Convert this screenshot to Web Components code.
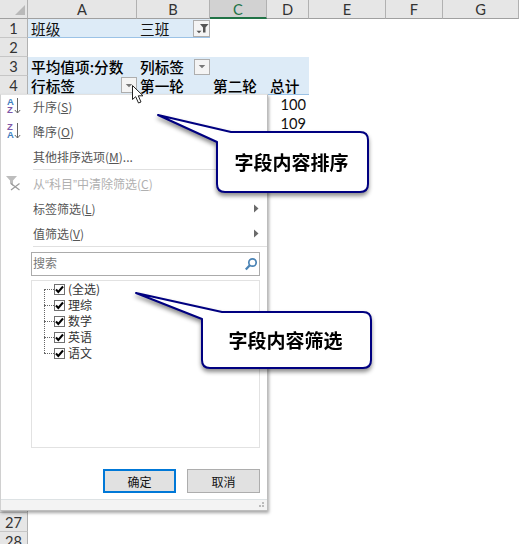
<!DOCTYPE html>
<html lang="zh">
<head>
<meta charset="utf-8">
<title>数据透视表筛选</title>
<style>
  html, body { margin: 0; padding: 0; background: #fff; }
  body { width: 519px; height: 544px; overflow: hidden; position: relative; }
</style>
</head>
<body>
<xl-sheet></xl-sheet>
<xl-filter-menu></xl-filter-menu>
<xl-cursor></xl-cursor>
<xl-callout left="158" top="115" width="212" height="79" body-x="60" body-y="18" attach-top="74" attach-left="28">字段内容排序</xl-callout>
<xl-callout left="136" top="293" width="237" height="77" body-x="67" body-y="20" attach-top="87" attach-left="27">字段内容筛选</xl-callout>

<script>
const CJK = '"Noto Sans CJK SC", "Noto Sans", sans-serif';
const LATIN = 'Lato, "Noto Sans CJK SC", sans-serif';

const COLS = [
  ['A', 109], ['B', 73], ['C', 57], ['D', 42],
  ['E', 77], ['F', 57], ['G', 76],
];
const ROW_COUNT = 28;

const FILTER_BTN = (funnel) => `
  <span class="drop ${funnel ? 'wide' : ''}">
    <svg width="15" height="15" viewBox="0 0 15 15">
      ${funnel
        ? '<path d="M6 3h8.500L11.500 6.500V11.500H9V6.500Z" fill="#555"/><path d="M2.500 9.800h5L5 12.300Z" fill="#555"/>'
        : '<path d="M4 6h7L7.500 9.500Z" fill="#777"/>'}
    </svg>
  </span>`;

// the worksheet behind the popup, no gridlines
class XlSheet extends HTMLElement {
  constructor() {
    super();
    this.attachShadow({ mode: 'open' });
  }

  connectedCallback() {
    const head = COLS.map(([name]) =>
      `<div class="ch ${name === 'C' ? 'sel' : ''}">${name}</div>`).join('');
    const cells = {
      1: { A: ['pv end', '班级'], B: ['pv end btn', '三班', true] },
      3: { A: ['pv bold', '平均值项:分数'], B: ['pv bold btn', '列标签', false], C: ['pv'], D: ['pv'] },
      4: { A: ['pv bold btn end', '行标签', false], B: ['pv bold end', '第一轮'], C: ['pv bold end', '第二轮'], D: ['pv bold end', '总计'] },
      5: { D: ['num', '100'] },
      6: { D: ['num', '109'] },
    };
    let rows = '';
    for (let r = 1; r <= ROW_COUNT; r++) {
      // rows 5-26 are under the popup
      rows += `<div class="rh">${r <= 4 || r >= 27 ? r : ''}</div>`;
      COLS.forEach(([name]) => {
        const c = (cells[r] || {})[name];
        if (!c) { rows += '<div class="c"></div>'; return; }
        const [cls, text, funnel] = c;
        rows += `<div class="c ${cls}"><span class="t">${text || ''}</span>${cls.includes('btn') ? FILTER_BTN(funnel) : ''}</div>`;
      });
    }
    this.shadowRoot.innerHTML = `
      <style>
        :host { display: block; width: 519px; height: 544px; overflow: hidden; }
        .grid {
          display: grid;
          grid-template-columns: 28px ${COLS.map(c => c[1] + 'px').join(' ')};
          grid-template-rows: 19px repeat(${ROW_COUNT}, 19px);
          font: 14.670px ${CJK};
          color: #111;
        }
        .corner {
          background: #e6e6e6;
          border-right: 1px solid #b1b1b1;
          border-bottom: 1px solid #a0a0a0;
          box-sizing: border-box;
          display: flex; align-items: flex-end; justify-content: flex-end;
          padding: 0 2px 3px 0;
        }
        .ch, .rh {
          background: #e6e6e6;
          box-sizing: border-box;
          font: 14.670px ${LATIN};
          color: #333;
          display: flex; align-items: center; justify-content: center;
        }
        .ch { border-right: 1px solid #b1b1b1; border-bottom: 1px solid #a0a0a0; padding-top: 1px; }
        .ch.sel { background: #d2d2d2; border-bottom: 2px solid #217346; color: #217346; }
        .rh { border-right: 1px solid #b1b1b1; border-bottom: 1px solid #c6c6c6; }
        .c {
          display: flex; align-items: center; justify-content: space-between;
          box-sizing: border-box; padding: 0 0 0 3px; min-width: 0;
          white-space: nowrap; line-height: 19px;
        }
        .pv { background: #ddebf7; }
        .end { border-bottom: 1px solid #9bc2e6; }
        .bold .t { font-weight: 500; color: #000; }
        .num { justify-content: flex-end; padding: 0 3px 0 0; font: 14.670px ${LATIN}; }
        .drop {
          flex: none; box-sizing: border-box; width: 16px; height: 16px; display: flex;
          align-items: center; justify-content: center;
          background: #f4f4f4; border: 1px solid #aeaeae;
        }
        .drop.wide { width: 17px; height: 17px; }
      </style>
      <div class="grid">
        <div class="corner"><svg width="10" height="10" style="display:block"><path d="M10 0v10H0Z" fill="#b9b9b9"/></svg></div>
        ${head}
        ${rows}
      </div>`;
  }
}

class XlMenuItem extends HTMLElement {
  constructor() {
    super();
    this.attachShadow({ mode: 'open' }).innerHTML = `
      <style>
        :host {
          display: flex; align-items: center; height: 25px;
          font: 12px ${CJK}; color: #555; position: relative;
        }
        :host([disabled]) { color: #b0b0b0; }
        .icon { flex: none; width: 32px; height: 25px; }
        .label { flex: 1; }
        .sub { flex: none; width: 13px; display: none; }
        :host([submenu]) .sub { display: block; }
        ::slotted(svg) { display: block; }
      </style>
      <div class="icon"><slot name="icon"></slot></div>
      <div class="label"><slot></slot></div>
      <svg class="sub" width="13" height="9" viewBox="0 0 13 9"><path d="M0 0.500l4.500 4-4.500 4Z" fill="#6a6a6a"/></svg>`;
  }
}

class XlCheckRow extends HTMLElement {
  constructor() {
    super();
    this.attachShadow({ mode: 'open' }).innerHTML = `
      <style>
        :host {
          display: flex; align-items: center; height: 16px;
          font: 12px/16px ${CJK}; color: #333;
        }
        .box {
          flex: none; box-sizing: border-box; width: 11px; height: 11px;
          border: 1px solid #707070; background: #fff; margin-right: 3px;
        }
        .box svg { display: block; }
      </style>
      <span class="box"><svg width="9" height="9" viewBox="0 0 9 9"><path d="M1 4.500l2.300 2.500L8 1.500" fill="none" stroke="#000" stroke-width="2"/></svg></span>
      <slot></slot>`;
  }
}

class XlButton extends HTMLElement {
  constructor() {
    super();
    this.attachShadow({ mode: 'open' }).innerHTML = `
      <style>
        :host {
          display: flex; align-items: center; justify-content: center;
          box-sizing: border-box; width: 73px; height: 24px;
          background: #e1e1e1; border: 1px solid #adadad;
          font: 12px ${CJK}; color: #111;
        }
        :host([primary]) { border: 2px solid #0078d7; }
      </style>
      <slot></slot>`;
  }
}

// the pivot field dropdown; lies over the sheet
class XlFilterMenu extends HTMLElement {
  constructor() {
    super();
    const SORT_ICON = (top, bottom, topFill, bottomFill) => `
      <svg slot="icon" width="32" height="25" viewBox="0 0 32 25">
        <text x="6" y="11" font-family="Liberation Sans" font-weight="bold" font-size="9.500" fill="${topFill}">${top}</text>
        <text x="6" y="19" font-family="Liberation Sans" font-weight="bold" font-size="9.500" fill="${bottomFill}">${bottom}</text>
        <path d="M16.500 4v15M13.800 16l2.700 3 2.700-3" fill="none" stroke="#666" stroke-width="1"/>
      </svg>`;
    this.attachShadow({ mode: 'open' }).innerHTML = `
      <style>
        :host {
          position: absolute; left: 0; top: 94px; width: 268px; height: 417px;
          box-sizing: border-box; background: #fff;
          border: 1px solid #bdbdbd; border-left: 1px solid #d0d0d0; border-top-color: #e2e2e2;
          box-shadow: 1px 2px 3px rgba(0,0,0,.35);
          display: flex; flex-direction: column;
        }
        .sep { height: 1px; background: #e0e0e0; margin-left: 32px; }
        .items { margin-top: -1px; }
        .q { font-family: "Liberation Sans", sans-serif; }
        .search {
          box-sizing: border-box; height: 24px; margin: 5px 7px 0 30px;
          border: 1px solid #ababab; display: flex; align-items: center;
          justify-content: space-between; padding: 0 1px 0 1px;
          font: 12px ${CJK}; color: #777;
        }
        .search span { padding-bottom: 3px; }
        .search svg { display: block; }
        .list {
          box-sizing: border-box; height: 168px; margin: 4px 7px 0 30px;
          border: 1px solid #e2e2e2; padding: 0 0 0 22px; position: relative;
        }
        .tree { position: relative; }
        .tree .v {
          position: absolute; left: -10px; top: 8px; height: 64px; width: 10px;
          border-left: 1px dotted #666;
        }
        .tree .h { display: flex; align-items: center; }
        .tree .h::before { content: ""; width: 10px; margin-left: -10px; border-top: 1px dotted #666; }
        .actions {
          display: flex; justify-content: flex-end; gap: 11px;
          margin: 21px 7px 0 0;
        }
        .grip {
          margin-top: auto; height: 11px; box-sizing: border-box;
          background: #f3f3f3; border-top: 1px solid #dde2e4;
          display: flex; justify-content: flex-end;
        }
        .grip svg { display: block; }
      </style>
      <div class="items">
        <xl-menu-item>${SORT_ICON('A', 'Z', '#3f7fbf', '#7e57a8')}升序(<u>S</u>)</xl-menu-item>
        <xl-menu-item>${SORT_ICON('Z', 'A', '#7e57a8', '#3f7fbf')}降序(<u>O</u>)</xl-menu-item>
        <xl-menu-item>其他排序选项(<u>M</u>)...</xl-menu-item>
        <div class="sep" style="margin-bottom:1px"></div>
        <xl-menu-item disabled>
          <svg slot="icon" width="32" height="25" viewBox="0 0 32 25">
            <path d="M5 5h11L12 9.500v5.500l-3-2.500V9.500Z" fill="#bdbdbd"/>
            <path d="M10 12.500l8.500 6.500M18.500 12.500L10 19" stroke="#9a9a9a" stroke-width="1.200"/>
          </svg>
          从<span class="q">“</span>科目<span class="q">”</span>中清除筛选(<u>C</u>)
        </xl-menu-item>
        <xl-menu-item submenu>标签筛选(<u>L</u>)</xl-menu-item>
        <xl-menu-item submenu>值筛选(<u>V</u>)</xl-menu-item>
      </div>
      <div class="sep"></div>
      <div class="search">
        <span>搜索</span>
        <svg width="14" height="14" viewBox="0 0 14 14">
          <circle cx="8.500" cy="5.500" r="3.700" fill="none" stroke="#4a83b5" stroke-width="1.700"/>
          <path d="M5.800 8.200L1.800 12.500" stroke="#4a83b5" stroke-width="2.300"/>
        </svg>
      </div>
      <div class="list">
        <div class="tree">
          <div class="v"></div>
          <xl-check-row class="h">(全选)</xl-check-row>
          <xl-check-row class="h">理综</xl-check-row>
          <xl-check-row class="h">数学</xl-check-row>
          <xl-check-row class="h">英语</xl-check-row>
          <xl-check-row class="h">语文</xl-check-row>
        </div>
      </div>
      <div class="actions">
        <xl-button primary>确定</xl-button>
        <xl-button>取消</xl-button>
      </div>
      <div class="grip">
        <svg width="10" height="9" viewBox="0 0 10 9">
          <path d="M5 2h2v2H5zM2 5h2v2H2zM5 5h2v2H5z" fill="#bbb"/>
        </svg>
      </div>`;
  }
}

// mouse pointer over the row label dropdown
class XlCursor extends HTMLElement {
  constructor() {
    super();
    this.attachShadow({ mode: 'open' }).innerHTML = `
      <style>
        :host { position: absolute; left: 131px; top: 84px; width: 15px; height: 21px; }
        svg { display: block; }
      </style>
      <svg width="15" height="21" viewBox="0 0 15 21">
        <path d="M1.500 1.500V15.500L4.700 12.700L7.500 19L10 18L7.300 11.800H12Z" fill="#fff" stroke="#222" stroke-width="1"/>
      </svg>`;
  }
}

// speech bubble: the tip sits at left/top, the body is offset by body-x/body-y
class XlCallout extends HTMLElement {
  constructor() {
    super();
    this.attachShadow({ mode: 'open' });
  }

  connectedCallback() {
    const n = (a) => Number(this.getAttribute(a));
    const w = n('width'), h = n('height');
    const bx = n('body-x'), by = n('body-y');
    const ax = n('attach-top'), ay = n('attach-left');
    const r = 8;
    const d = `M1 1 L${ax} ${by} H${w - 1 - r} Q${w - 1} ${by} ${w - 1} ${by + r}
      V${h - 1 - r} Q${w - 1} ${h - 1} ${w - 1 - r} ${h - 1}
      H${bx + r} Q${bx} ${h - 1} ${bx} ${h - 1 - r} V${ay} Z`;
    this.shadowRoot.innerHTML = `
      <style>
        :host {
          position: absolute; left: ${n('left') - 1}px; top: ${n('top') - 1}px;
          width: ${w}px; height: ${h}px;
          filter: drop-shadow(0 3px 2px rgba(0,0,0,.45));
        }
        svg { position: absolute; inset: 0; overflow: visible; }
        .text {
          position: absolute; left: ${bx}px; right: 0; top: ${by}px; bottom: 0;
          display: flex; align-items: center; justify-content: center;
          padding: 0 3px 2px 0;
          font: bold 19px ${CJK}; color: #000; white-space: nowrap;
        }
      </style>
      <svg width="${w}" height="${h}">
        <path d="${d}" fill="#fff" stroke="#000080" stroke-width="2" stroke-linejoin="round"/>
      </svg>
      <div class="text"><slot></slot></div>`;
  }
}

customElements.define('xl-sheet', XlSheet);
customElements.define('xl-menu-item', XlMenuItem);
customElements.define('xl-check-row', XlCheckRow);
customElements.define('xl-button', XlButton);
customElements.define('xl-filter-menu', XlFilterMenu);
customElements.define('xl-cursor', XlCursor);
customElements.define('xl-callout', XlCallout);
</script>
</body>
</html>
